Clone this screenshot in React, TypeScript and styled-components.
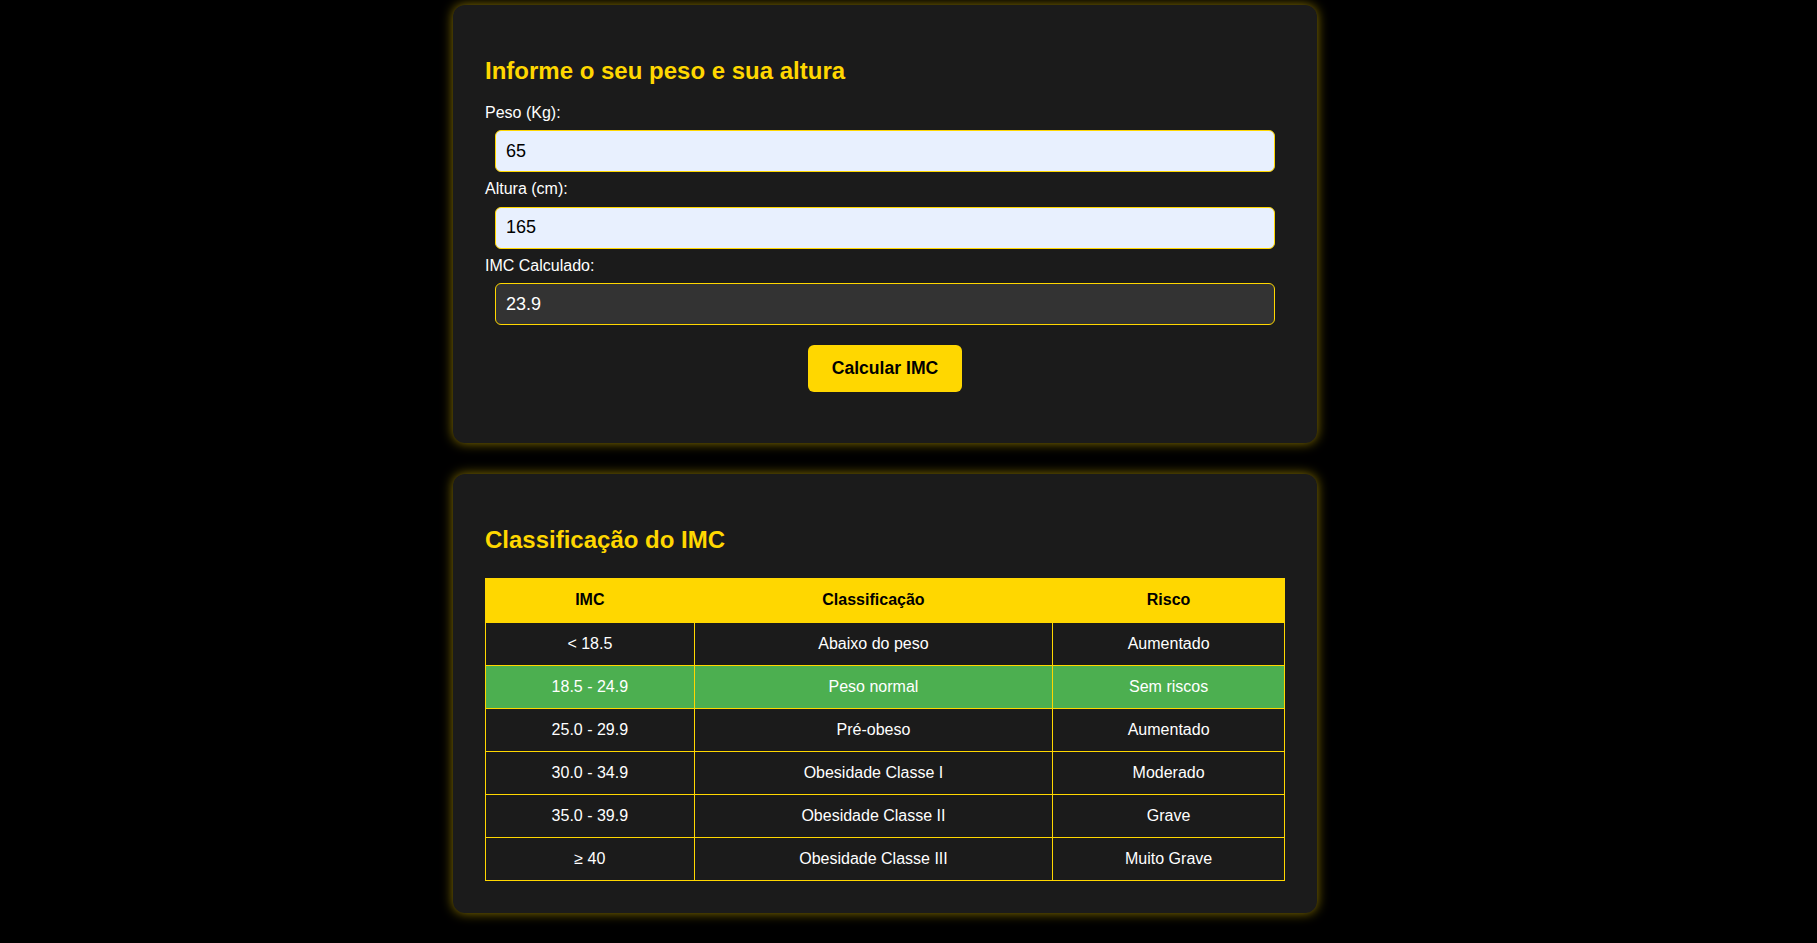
import React from "react";
import styled, { createGlobalStyle } from "styled-components";

const Global = createGlobalStyle`
  html, body { margin: 0; padding: 0; background: #000; }
  body { font-family: "Liberation Sans", Arial, sans-serif; color: #fff; }
  * { box-sizing: border-box; }
`;

const Page = styled.main`
  display: flex;
  flex-direction: column;
  align-items: flex-start;
  gap: 31px;
  padding: 5px 0 31px 453px;
`;

const Card = styled.section`
  width: 864px;
  padding: 32px;
  background: #1b1b1b;
  border-radius: 12px;
  box-shadow: 0 0 12px rgba(255, 215, 0, 0.55);
`;

const Title = styled.h2`
  margin: 20px 0 19px;
  font-size: 24px;
  line-height: 28px;
  font-weight: bold;
  color: #ffd700;
`;

const Label = styled.label`
  display: block;
  font-size: 16px;
  line-height: 18.4px;
  color: #fff;
`;

const Input = styled.input<{ $readOnly?: boolean }>`
  display: block;
  width: calc(100% - 20px);
  height: 42px;
  margin: 8px 10px;
  padding: 10px;
  font-family: "Liberation Sans", Arial, sans-serif;
  font-size: 18px;
  line-height: 20px;
  border: 1px solid #ffd700;
  border-radius: 6px;
  outline: none;
  background: ${(p) => (p.$readOnly ? "#333" : "#e8f0fe")};
  color: ${(p) => (p.$readOnly ? "#fff" : "#000")};
`;

const Button = styled.button`
  display: block;
  margin: 20px auto 19px;
  padding: 13px 24px;
  font-family: "Liberation Sans", Arial, sans-serif;
  font-size: 17.6px;
  line-height: 20.5px;
  font-weight: bold;
  color: #000;
  background: #ffd700;
  border: none;
  border-radius: 6px;
  cursor: pointer;
`;

const Table = styled.table`
  width: 100%;
  margin-top: 24.5px;
  border-collapse: collapse;
  font-size: 16px;
`;

const Th = styled.th<{ $w: number }>`
  width: ${(p) => p.$w}px;
  padding: 12px;
  line-height: 18.4px;
  background: #ffd700;
  color: #000;
  font-weight: bold;
  border: 1px solid #ffd700;
  text-align: center;
`;

const Row = styled.tr<{ $highlight?: boolean }>`
  background: ${(p) => (p.$highlight ? "#4caf50" : "#1b1b1b")};
`;

const Td = styled.td`
  padding: 12px;
  line-height: 18px;
  color: #fff;
  border: 1px solid #ffd700;
  text-align: center;
`;

const rows = [
  ["< 18.5", "Abaixo do peso", "Aumentado"],
  ["18.5 - 24.9", "Peso normal", "Sem riscos"],
  ["25.0 - 29.9", "Pré-obeso", "Aumentado"],
  ["30.0 - 34.9", "Obesidade Classe I", "Moderado"],
  ["35.0 - 39.9", "Obesidade Classe II", "Grave"],
  ["≥ 40", "Obesidade Classe III", "Muito Grave"],
];

export default function App() {
  return (
    <>
      <Global />
      <Page>
        <Card>
          <Title>Informe o seu peso e sua altura</Title>
          <Label htmlFor="peso">Peso (Kg):</Label>
          <Input id="peso" defaultValue="65" />
          <Label htmlFor="altura">Altura (cm):</Label>
          <Input id="altura" defaultValue="165" />
          <Label htmlFor="imc">IMC Calculado:</Label>
          <Input id="imc" $readOnly readOnly value="23.9" />
          <Button>Calcular IMC</Button>
        </Card>
        <Card>
          <Title>Classificação do IMC</Title>
          <Table>
            <thead>
              <tr>
                <Th $w={209}>IMC</Th>
                <Th $w={359}>Classificação</Th>
                <Th $w={232}>Risco</Th>
              </tr>
            </thead>
            <tbody>
              {rows.map((r, i) => (
                <Row key={i} $highlight={i === 1}>
                  {r.map((c, j) => (
                    <Td key={j}>{c}</Td>
                  ))}
                </Row>
              ))}
            </tbody>
          </Table>
        </Card>
      </Page>
    </>
  );
}
